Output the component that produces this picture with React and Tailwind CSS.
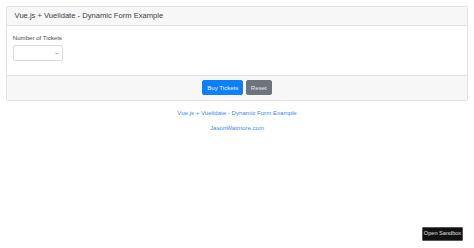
import React from 'react'

const font = { fontFamily: '"Liberation Sans", Arial, sans-serif' }

const App = () => {
  return (
    <div className="min-h-[248px] bg-white text-[#4a4d50] text-[6.1px] leading-[1.5]" style={font}>
      <div className="p-[6px] pb-0">
        <div className="border border-[#e2e2e2] rounded-[2px] bg-white">
          <div className="bg-[#f7f7f7] border-b border-[#e2e2e2] px-[7.6px] py-[4.4px]">
            <h5 className="text-[7.6px] leading-[1.2] font-normal text-[#3a3c3e]">Vue.js + Vuelidate - Dynamic Form Example</h5>
          </div>

          <div className="px-[5.8px] pt-[7.4px] pb-[7.6px]">
            <div className="mb-[6px]">
              <label className="block mb-[3px]">Number of Tickets</label>
              <div className="w-[50px] h-[15.5px] border border-[#d8dce0] rounded-[2px] bg-white flex items-center justify-end pr-[3px]">
                <svg width="4" height="3" viewBox="0 0 8 5" fill="none" stroke="#777" strokeWidth="1.4">
                  <path d="M1 1l3 3 3-3" />
                </svg>
              </div>
            </div>
          </div>

          <div className="bg-[#f7f7f7] border-t border-[#e2e2e2] px-[7.6px] py-[4.6px] flex justify-center gap-[2.5px]">
            <button className="h-[15px] bg-[#0d7ff9] border border-[#0d7ff9] text-[#eef5ff] rounded-[2px] px-[4px] leading-none">
              Buy Tickets
            </button>
            <button className="h-[15px] bg-[#6c757d] border border-[#6c757d] text-[#e8eaec] rounded-[2px] px-[4px] leading-none">
              Reset
            </button>
          </div>
        </div>
      </div>

      <div className="text-center mt-[7px]">
        <p className="mb-[6.1px]">
          <a className="text-[#2f8cf5]">Vue.js + Vuelidate - Dynamic Form Example</a>
        </p>
        <p>
          <a className="text-[#2f8cf5]">JasonWatmore.com</a>
        </p>
      </div>

      <div className="fixed right-[11px] bottom-[7px] bg-[#111] border border-[#555] text-[#e0e0e0] text-[5.6px] leading-none rounded-[1px] w-[41px] h-[14px] flex items-center justify-center">
        Open Sandbox
      </div>
    </div>
  )
}

export default App
